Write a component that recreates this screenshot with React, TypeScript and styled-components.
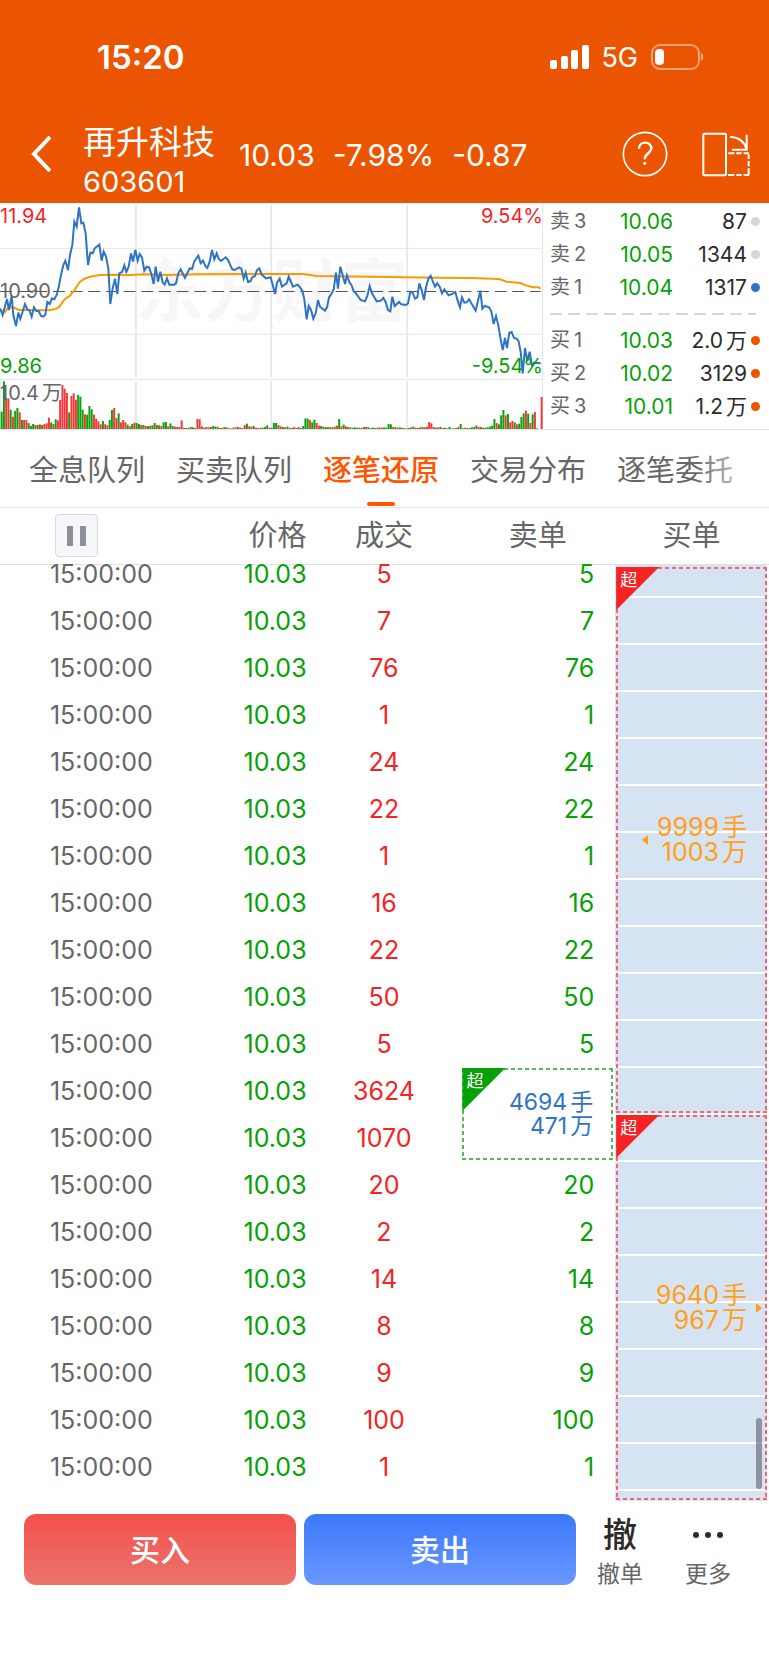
import React from "react";
import styled, { createGlobalStyle, css } from "styled-components";

const color = {
  brand: "#eb5502",
  active: "#ff5500",
  up: "#f52323",
  down: "#06a106",
  blue: "#2f73c4",
  amber: "#ff9f1a",
  ink: "#2b2b2b",
  grey: "#666666",
  rule: "#dfe1e6",
  cell: "#d6e3f3",
};

const Global = createGlobalStyle`
  *, *::before, *::after { box-sizing: border-box; }
  body {
    margin: 0;
    background: #fff;
    color: ${color.grey};
    font-family: Inter, "Noto Sans CJK SC", sans-serif;
  }
  button { font: inherit; border: 0; padding: 0; background: none; cursor: pointer; }
`;

const Page = styled.div`
  display: flex;
  flex-direction: column;
  min-height: 100vh;
  background: #fff;
`;

/* ---------- header ---------- */

const Header = styled.header`
  background: ${color.brand};
  color: #fff;
`;

const StatusBar = styled.div`
  display: flex;
  align-items: center;
  height: 114px;
  padding: 0 65px 0 97px;
`;

const Clock = styled.span`
  flex: 1;
  font-size: 33px;
  font-weight: 600;
`;

const Network = styled.span`
  margin: 0 13px 0 12px;
  font-size: 27px;
`;

const NavBar = styled.nav`
  display: flex;
  align-items: flex-start;
  padding: 8px 19px 1px 31px;
`;

const NavButton = styled.button`
  display: flex;
  align-items: center;
  height: 64px;
  color: inherit;
`;

const StockTitle = styled.h1`
  margin: 0 24px 0 32px;
  font-size: 33px;
  font-weight: 400;
  line-height: 40px;
  white-space: nowrap;
`;

const StockCode = styled.small`
  display: block;
  font-size: 29px;
`;

const Quote = styled.div`
  display: flex;
  flex: 1;
  gap: 18px;
  font-size: 30px;
  line-height: 66px;
  white-space: nowrap;
`;

const NavTools = styled.div`
  display: flex;
  gap: 34px;
`;

/* ---------- chart and order book ---------- */

const Market = styled.section`
  display: flex;
  height: 227px;
  border-bottom: 1px solid ${color.rule};
`;

const ChartPane = styled.div`
  position: relative;
  flex: 1;
  min-width: 0;
`;

const ChartSvg = styled.svg`
  position: relative;
  display: block;
  width: 100%;
  height: 226px;
`;

const Watermark = styled.div`
  position: absolute;
  top: 54px;
  left: 0;
  right: 0;
  color: #f7f7f7;
  font-size: 68px;
  font-weight: 700;
  line-height: 68px;
  text-align: center;
`;

const ChartLabel = styled.span<{ $top: number; $tone: string; $end?: boolean }>`
  position: absolute;
  top: ${(p) => p.$top}px;
  ${(p) => (p.$end ? "right: 1px;" : "left: 0;")}
  color: ${(p) => p.$tone};
  font-size: 20px;
  line-height: 24px;
`;

const Unit = styled.span`
  display: inline-block;
  margin-left: 3px;
`;

const OrderBook = styled.div`
  width: 225px;
  padding: 2px 9px 0 6px;
`;

const Quotes = styled.table`
  width: 100%;
  border-collapse: collapse;
  table-layout: fixed;
  font-size: 21px;
  line-height: 33px;

  th, td { padding: 0; font-weight: 400; text-align: right; }
  th { width: 48px; font-size: 20px; text-align: left; }
  td { color: ${color.ink}; }
  td:nth-child(2) { width: 75px; color: ${color.down}; }
`;

const Level = styled.span`
  margin-left: 4px;
`;

const Dot = styled.i<{ $tone: string }>`
  display: inline-block;
  width: 9px;
  height: 9px;
  margin-left: 4px;
  border-radius: 50%;
  background: ${(p) => p.$tone};
  vertical-align: 3px;
`;

const Spread = styled.div`
  height: 2px;
  margin: 9px 4px 9px 0;
  background: repeating-linear-gradient(90deg, #d4d6dd 0 12px, transparent 12px 18px);
`;

/* ---------- tabs ---------- */

const Tabs = styled.div`
  position: relative;
  display: flex;
  gap: 31px;
  height: 78px;
  padding-left: 29px;
  border-bottom: 1px solid #e9e9eb;
  overflow: hidden;

  &::after {
    content: "";
    position: absolute;
    inset: 0 0 0 auto;
    width: 76px;
    background: linear-gradient(90deg, rgba(255, 255, 255, 0), #fff);
  }
`;

const Tab = styled.button<{ $active?: boolean }>`
  position: relative;
  flex: none;
  height: 77px;
  padding-top: 4px;
  color: ${color.grey};
  font-size: 29px;
  line-height: 72px;

  ${(p) =>
    p.$active &&
    css`
      color: ${color.active};
      font-weight: 500;

      &::after {
        content: "";
        position: absolute;
        bottom: 1px;
        left: 50%;
        width: 28px;
        height: 4px;
        margin-left: -14px;
        border-radius: 2px;
        background: ${color.active};
      }
    `}
`;

/* ---------- tick table ---------- */

const TickArea = styled.section`
  position: relative;
`;

const TickTable = styled.table`
  width: 100%;
  border-spacing: 0;
  table-layout: fixed;

  th, td { padding: 0; font-weight: 400; text-align: right; }
`;

const HeadCell = styled.th<{ $end?: boolean }>`
  && {
    height: 57px;
    padding: 0 1px 1px 0;
    border-bottom: 1px solid ${color.rule};
    font-size: 29px;
    line-height: 43px;
    text-align: ${(p) => (p.$end ? "right" : "center")};
  }
`;

const PauseButton = styled.button`
  display: flex;
  align-items: center;
  justify-content: center;
  gap: 7px;
  width: 43px;
  height: 43px;
  margin: 0 auto;
  border: 1px solid #d5d9e0;
  border-radius: 4px;
  background: #f5f7fb;

  i { width: 6px; height: 20px; background: #8e9099; }
`;

const TickRow = styled.tr<{ $cut?: boolean }>`
  height: ${(p) => (p.$cut ? 32 : 47)}px;
  font-size: 25px;
  line-height: 19px;

  td { vertical-align: bottom; }
`;

const TailRow = styled.tr`
  height: 11px;
`;

const Value = styled.td<{ $tone: string; $kind?: "center" | "inset" }>`
  && {
    padding-bottom: 13px;
    padding-right: ${(p) => (p.$kind === "inset" ? 21 : 1)}px;
    color: ${(p) => p.$tone};
    text-align: ${(p) => (p.$kind === "center" ? "center" : "right")};
  }
`;

const BigCell = styled.td<{ $filled?: boolean; $anchor?: string }>`
  position: relative;
  ${(p) =>
    p.$filled &&
    css`
      background: linear-gradient(#fff 1px, ${color.cell} 1px 46px, #fff 46px)
        0 ${p.$anchor} / calc(100% - 2px) 47px repeat-y;
    `}
`;

const BigOrder = styled.div<{ $edge: string; $tone: string; $top?: number; $compact?: boolean }>`
  --dash: ${(p) => p.$edge} 0 4px, transparent 4px 7px;
  position: absolute;
  inset: ${(p) => p.$top ?? 1}px 2px 1px 1px;
  display: flex;
  flex-direction: column;
  justify-content: center;
  padding-right: 20px;
  color: ${(p) => p.$tone};
  font-size: ${(p) => (p.$compact ? 23 : 25)}px;
  line-height: ${(p) => (p.$compact ? 24 : 25)}px;
  text-align: right;
  background:
    repeating-linear-gradient(90deg, var(--dash)) top / 100% 2px no-repeat,
    repeating-linear-gradient(90deg, var(--dash)) bottom / 100% 2px no-repeat,
    repeating-linear-gradient(180deg, var(--dash)) left / 2px 100% no-repeat,
    repeating-linear-gradient(180deg, var(--dash)) right / 2px 100% no-repeat;
`;

const Corner = styled.span<{ $tone: string }>`
  position: absolute;
  top: 0;
  left: 0;
  width: 43px;
  height: 43px;
  padding: 4px 0 0 4px;
  background: ${(p) => p.$tone};
  clip-path: polygon(0 0, 100% 0, 0 100%);
  color: #fff;
  font-size: 17px;
  line-height: 18px;
  text-align: left;
`;

const Pointer = styled.i<{ $side: "left" | "right" }>`
  position: absolute;
  top: 50%;
  margin-top: -5px;
  border: 5px solid transparent;
  ${(p) =>
    p.$side === "left"
      ? `left: 26px; border-left: 0; border-right: 6px solid ${color.amber};`
      : `right: 5px; border-right: 0; border-left: 6px solid ${color.amber};`}
`;

const ScrollThumb = styled.div`
  position: absolute;
  right: 7px;
  bottom: 12px;
  width: 6px;
  height: 71px;
  border-radius: 3px;
  background: rgba(90, 96, 104, 0.6);
`;

/* ---------- footer ---------- */

const ActionBar = styled.footer`
  display: flex;
  align-items: flex-start;
  padding: 13px 17px 80px 24px;
`;

const TradeButtons = styled.div`
  display: flex;
  flex: 1;
  gap: 8px;
`;

const TradeButton = styled.button<{ $from: string; $to: string }>`
  flex: 1;
  height: 71px;
  border-radius: 12px;
  background: linear-gradient(${(p) => p.$from}, ${(p) => p.$to});
  && { padding-bottom: 4px; color: #fff; font-size: 30px; font-weight: 500; }
`;

const MoreButton = styled.button`
  display: flex;
  flex-direction: column;
  align-items: center;
  width: 88px;
  color: ${color.grey};
  font-size: 23px;
  line-height: 36px;
`;

const Glyph = styled.span`
  display: flex;
  align-items: center;
  height: 42px;
  color: ${color.ink};
  font-size: 34px;
  font-weight: 500;
`;

/* ---------- data ---------- */

const PRICE =
  "0,325 8,345 21,297 27,330 35,288 40,345 48,378 55,338 61,357 75,312 82,328 88,330 95,350 102,322 109,333 116,333 123,348 130,350 136,344 142,306 149,312 156,295 163,298 170,285 176,262 183,225 190,195 196,182 204,210 210,165 217,135 223,65 230,80 237,22 244,70 250,68 257,100 264,195 271,158 278,160 284,145 298,134 305,182 311,155 318,170 325,205 331,312 338,265 345,236 352,282 358,220 366,216 373,196 379,216 386,200 393,160 399,185 406,150 413,182 419,162 426,172 433,212 440,200 447,202 454,222 461,252 467,200 474,245 481,215 488,247 494,254 501,235 508,254 522,254 528,250 535,220 542,208 555,234 569,205 576,207 583,184 595,167 602,190 609,182 616,198 622,204 629,185 636,150 643,178 650,160 656,176 663,183 677,172 684,180 697,208 704,210 717,202 724,206 731,236 737,218 744,246 751,244 757,232 765,228 771,210 778,205 785,224 798,235 812,232 818,254 825,282 831,248 839,236 846,260 860,250 866,230 873,246 879,260 893,254 900,262 907,272 913,298 920,358 926,318 933,330 940,356 947,340 954,300 960,320 975,332 981,322 987,292 994,282 1001,268 1008,218 1014,266 1021,200 1028,225 1035,252 1041,226 1048,246 1055,256 1061,274 1068,280 1082,300 1095,304 1102,288 1109,258 1116,280 1123,292 1130,304 1143,302 1150,294 1157,306 1164,330 1171,334 1177,290 1184,318 1197,306 1204,313 1218,315 1224,310 1231,275 1238,278 1245,296 1252,292 1258,250 1265,270 1272,300 1278,262 1285,236 1292,227 1299,246 1305,260 1312,250 1319,260 1326,280 1333,268 1346,286 1360,280 1366,276 1373,302 1380,322 1386,292 1393,308 1400,307 1407,298 1414,310 1427,332 1441,272 1447,326 1454,318 1467,322 1474,334 1481,372 1488,348 1495,376 1501,412 1508,450 1515,414 1521,444 1528,398 1535,396 1542,414 1550,416 1556,424 1562,456 1568,520 1575,444 1582,484 1589,455 1596,496 1603,488 1622,490";

const AVERAGE =
  "0,330 15,336 25,322 40,322 55,329 80,330 120,331 150,330 170,326 178,320 195,297 210,287 225,268 238,247 252,237 270,230 300,225 340,224 380,226 430,223 500,225 600,223 720,222 910,222 950,228 1010,229 1110,230 1210,232 1310,233 1410,234 1480,236 1500,238 1520,245 1560,249 1580,257 1600,262 1615,262 1622,266";

/* One entry per minute: r rises, g falls. Each line starts at the minute that is its key. */
const VOLUME_RUNS: Record<number, string> = {
  0: "g52 g143 r92 r92 g58 r37 g54 g63 r50 g27 r27 r27 g18 g9 g15 r12 g12 r14 g12 r15 r17 r34 g20 r15 g29 r26 r87 r132 r121 r108 g50 r99 r107 r88 g102 g97 g58 r44 g43 g69 g59 r43 r31 r23 r14 g24 r14 r11 g27 g57 r63 r33 g47 r20 r27 r20 g13 r8 g15 r19",
  60: "g18 g15 r12 g12 r9 g9 r10 g11 g18 r12 g11 r9 g20 g21 r8 g17 g9 r7 r6 r6 r26 r4 g3 r4 g6 g5 r3 r30 r29 r8 g4 r6 r5 r6 g9 g7 r7 g3 r3 g6 r5 g2 r2 g4 r5 r6 g4 r3 r12 g16",
  110: "r8 r7 g9 r4 r3 r4 g4 g6 g11 r4 r4 g18 g18 r12 r8 g6 r5 g7 r4 g3 r6 g3 r6 r3 g9",
  135: "g32 g31 r27 g20 g28 r18 r10 g9 r7 g6 g5 r6 g5 r7 r10",
  150: "g30 r8 g13 r8 g6 r5 g4 g5 r4 g4 g3 r6 r6 g5 r3 g4 g3 g4 r5 r4 g5 g4",
  172: "g15 g14 r6 g5 r4 g5 g3 r3 r2 g3 r5 g7 r4 g3 r5 r6 g5 r7 r21 r17",
  192: "g6 r4 r5 g6 r3 g4 r2 g6 g2 r2 g3 r6 g15 g2 r4 g3 g3 g5 r6 g11 r6 r6 g4 g4 g5 g7",
  218: "g10 g30 r18 g14 g41 g57 r41 g45 r20 r24 g20 r14 g16 g36 g47 r55 g46 r18 g44 r51 g2",
  240: "r96",
};

const VOLUME = Object.entries(VOLUME_RUNS).flatMap(([start, run]) =>
  run.split(" ").map((v, i) => ({
    minute: Number(start) + i,
    up: v[0] === "r",
    size: Number(v.slice(1)),
  })),
);

const ASKS = [
  ["卖", "3", "10.06", "87", "", "#d4d6dd"],
  ["卖", "2", "10.05", "1344", "", "#d4d6dd"],
  ["卖", "1", "10.04", "1317", "", color.blue],
];
const BIDS = [
  ["买", "1", "10.03", "2.0", "万", color.brand],
  ["买", "2", "10.02", "3129", "", color.brand],
  ["买", "3", "10.01", "1.2", "万", color.brand],
];

const TABS = ["全息队列", "买卖队列", "逐笔还原", "交易分布", "逐笔委托"];

const TICKS = [5, 7, 76, 1, 24, 22, 1, 16, 22, 50, 5, 3624, 1070, 20, 2, 14, 8, 9, 100, 1];

/* ---------- pieces ---------- */

const Chart = () => (
  <ChartPane>
    <Watermark aria-hidden="true">东方财富</Watermark>
    <ChartSvg viewBox="0 9 1632 678" preserveAspectRatio="none" role="img" aria-label="分时图">
      <g stroke="#e1e5ec" strokeWidth="5">
        <path d="M408 15V531M814 15V531M1222 15V531M408 543V687M814 543V687M1222 543V687" />
        <path strokeWidth="3" d="M0 145H1628M0 403H1628M0 538H1628M1628 9V687M1 538V687" />
      </g>
      <path d="M0 274.5H1622" stroke="#555" strokeWidth="3" strokeDasharray="36 17" />
      {VOLUME.map((v) => (
        <rect
          key={v.minute}
          x={2 + v.minute * 6.75}
          y={687 - v.size}
          width="6"
          height={v.size}
          fill={v.up ? "#f5393b" : "#0ea30e"}
        />
      ))}
      <polyline points={AVERAGE} fill="none" stroke="#ff9800" strokeWidth="6" />
      <polyline points={PRICE} fill="none" stroke={color.blue} strokeWidth="6" />
    </ChartSvg>
    <ChartLabel $top={1} $tone={color.up}>11.94</ChartLabel>
    <ChartLabel $top={1} $tone={color.up} $end>9.54%</ChartLabel>
    <ChartLabel $top={76} $tone={color.grey}>10.90</ChartLabel>
    <ChartLabel $top={151} $tone={color.down}>9.86</ChartLabel>
    <ChartLabel $top={151} $tone={color.down} $end>-9.54%</ChartLabel>
    <ChartLabel $top={178} $tone={color.grey}>10.4<Unit>万</Unit></ChartLabel>
  </ChartPane>
);

const QuoteRows = ({ rows }: { rows: string[][] }) => (
  <Quotes>
    <tbody>
      {rows.map(([side, level, price, qty, unit, tone]) => (
        <tr key={level}>
          <th scope="row">{side}<Level>{level}</Level></th>
          <td>{price}</td>
          <td>
            {qty}
            {unit && <Unit>{unit}</Unit>}
            <Dot $tone={tone} />
          </td>
        </tr>
      ))}
    </tbody>
  </Quotes>
);

type BigProps = {
  lots: string;
  amount: string;
  edge: string;
  corner: string;
  tone: string;
  top?: number;
  compact?: boolean;
  pointer?: "left" | "right";
};

const Big = ({ lots, amount, edge, corner, tone, top, compact, pointer }: BigProps) => (
  <BigOrder $edge={edge} $tone={tone} $top={top} $compact={compact}>
    <Corner $tone={corner}>超</Corner>
    <span>{lots}<Unit>手</Unit></span>
    <span>{amount}<Unit>万</Unit></span>
    {pointer && <Pointer $side={pointer} />}
  </BigOrder>
);

const sellCell = (i: number) => {
  if (i === 12) return null;
  if (i === 11)
    return (
      <BigCell rowSpan={2}>
        <Big lots="4694" amount="471" edge="#4fbe4f" corner="#06a106" tone={color.blue} compact />
      </BigCell>
    );
  return <Value $tone={color.down} $kind="inset">{TICKS[i]}</Value>;
};

const buyCell = (i: number) => {
  if (i === 0)
    return (
      <BigCell rowSpan={12} $filled $anchor="bottom">
        <Big lots="9999" amount="1003" edge="#f4656e" corner={color.up} tone={color.amber} top={2} pointer="left" />
      </BigCell>
    );
  if (i === 12)
    return (
      <BigCell rowSpan={9} $filled $anchor="top">
        <Big lots="9640" amount="967" edge="#f4656e" corner={color.up} tone={color.amber} pointer="right" />
      </BigCell>
    );
  return null;
};

export default function App() {
  return (
    <Page>
      <Global />
      <Header>
        <StatusBar>
          <Clock>15:20</Clock>
          <svg width="39" height="24" viewBox="0 0 39 24" fill="#fff" aria-hidden="true">
            <rect x="0" y="15" width="7" height="9" rx="2" />
            <rect x="11" y="11" width="7" height="13" rx="2" />
            <rect x="21" y="5" width="7" height="19" rx="2" />
            <rect x="32" y="0" width="7" height="24" rx="2" />
          </svg>
          <Network>5G</Network>
          <svg width="53" height="26" viewBox="0 0 53 26" aria-hidden="true">
            <rect x="1" y="1" width="47" height="24" rx="8" fill="none" stroke="#fff" strokeOpacity=".45" strokeWidth="2" />
            <rect x="4" y="5" width="9" height="16" rx="4" fill="#fff" />
            <path d="M50 9C53 10 53 16 50 17Z" fill="#fff" fillOpacity=".5" />
          </svg>
        </StatusBar>
        <NavBar>
          <NavButton aria-label="返回">
            <svg width="20" height="36" viewBox="0 0 20 36" fill="none" stroke="#fff" strokeWidth="4">
              <path d="M19 1L3 18L19 35" />
            </svg>
          </NavButton>
          <StockTitle>
            再升科技<StockCode>603601</StockCode>
          </StockTitle>
          <Quote>
            <span>10.03</span>
            <span>-7.98%</span>
            <span>-0.87</span>
          </Quote>
          <NavTools>
            <NavButton aria-label="帮助">
              <svg width="46" height="46" viewBox="64 63 138 138" fill="none" stroke="#fff" strokeWidth="5">
                <circle cx="133" cy="132" r="65" />
                <path strokeWidth="7" d="M115 116C115 92 152 92 152 115C152 130 132 130 132 148" />
                <circle cx="132" cy="160" r="5" fill="#fff" stroke="none" />
              </svg>
            </NavButton>
            <NavButton aria-label="切换横屏">
              <svg width="48" height="45" viewBox="306 64 144 135" fill="none" stroke="#fff" strokeWidth="6">
                <rect x="310" y="69" width="68" height="125" rx="3" />
                <path d="M390 78C416 80 434 94 439 115M440 72V117H396" />
                <path d="M385 128H403M409 128H425M431 128H447M446 131V145M446 151V167M446 173V193M384 193H403M409 193H425M431 193H447" />
              </svg>
            </NavButton>
          </NavTools>
        </NavBar>
      </Header>

      <Market>
        <Chart />
        <OrderBook>
          <QuoteRows rows={ASKS} />
          <Spread />
          <QuoteRows rows={BIDS} />
        </OrderBook>
      </Market>

      <Tabs role="tablist">
        {TABS.map((t) => (
          <Tab key={t} role="tab" aria-selected={t === "逐笔还原"} $active={t === "逐笔还原"}>
            {t}
          </Tab>
        ))}
      </Tabs>

      <TickArea>
        <TickTable>
          <thead>
            <tr>
              <HeadCell>
                <PauseButton aria-label="暂停">
                  <i />
                  <i />
                </PauseButton>
              </HeadCell>
              <HeadCell $end>价格</HeadCell>
              <HeadCell>成交</HeadCell>
              <HeadCell>卖单</HeadCell>
              <HeadCell>买单</HeadCell>
            </tr>
          </thead>
          <tbody>
            {TICKS.map((lots, i) => (
              <TickRow key={i} $cut={i === 0}>
                <Value $tone={color.grey}>15:00:00</Value>
                <Value $tone={color.down}>10.03</Value>
                <Value $tone={color.up} $kind="center">{lots}</Value>
                {sellCell(i)}
                {buyCell(i)}
              </TickRow>
            ))}
            <TailRow>
              <td colSpan={4} />
            </TailRow>
          </tbody>
        </TickTable>
        <ScrollThumb />
      </TickArea>

      <ActionBar>
        <TradeButtons>
          <TradeButton $from="#f4504b" $to="#ec746e">买入</TradeButton>
          <TradeButton $from="#3b78f9" $to="#6b97ff">卖出</TradeButton>
        </TradeButtons>
        <MoreButton>
          <Glyph>撤</Glyph>
          撤单
        </MoreButton>
        <MoreButton>
          <Glyph>
            <svg width="30" height="6" viewBox="0 0 30 6" fill={color.ink} aria-hidden="true">
              <circle cx="3" cy="3" r="3" />
              <circle cx="15" cy="3" r="3" />
              <circle cx="27" cy="3" r="3" />
            </svg>
          </Glyph>
          更多
        </MoreButton>
      </ActionBar>
    </Page>
  );
}
